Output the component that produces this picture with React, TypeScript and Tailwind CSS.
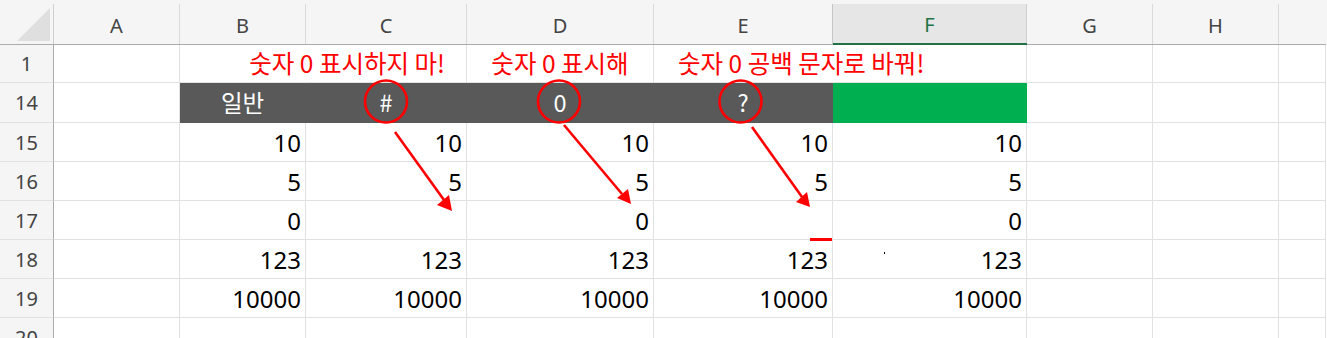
import React from "react";

const cols = [
  { k: "A", w: "w-[126px]" },
  { k: "B", w: "w-[126px]" },
  { k: "C", w: "w-[161px]" },
  { k: "D", w: "w-[187px]" },
  { k: "E", w: "w-[179px]" },
  { k: "F", w: "w-[194px]" },
  { k: "G", w: "w-[126px]" },
  { k: "H", w: "w-[126px]" },
  { k: "I", w: "w-[47px]" },
];

const latin = { fontFamily: '"Noto Sans", "Liberation Sans", sans-serif' };
const kr = { fontFamily: '"Noto Sans CJK KR", "Noto Sans", sans-serif' };

const data: Record<string, (string | number)[]> = {
  "15": [10, 10, 10, 10, 10],
  "16": [5, 5, 5, 5, 5],
  "17": [0, "", 0, "", 0],
  "18": [123, 123, 123, 123, 123],
  "19": [10000, 10000, 10000, 10000, 10000],
  "20": ["", "", "", "", ""],
};

function RowHead({ n, h }: { n: string; h: string }) {
  return (
    <div
      className={`w-[54px] ${h} shrink-0 bg-[#f5f5f5] border-r border-b border-r-[#ababab] border-b-[#e1e1e1] flex items-center justify-center text-[20px] text-[#444444] pt-[1px]`}
      style={latin}
    >
      {n}
    </div>
  );
}

function DataRow({ n }: { n: string }) {
  const vals = data[n];
  return (
    <div className="flex h-[39px]">
      <RowHead n={n} h="h-[39px]" />
      {cols.map((c, i) => {
        const v = i >= 1 && i <= 5 ? vals[i - 1] : "";
        return (
          <div
            key={c.k}
            className={`${c.w} h-[39px] shrink-0 border-r border-b border-[#e1e1e1] flex items-center justify-end pr-[4px] pt-[2px] text-[24px] text-black`}
            style={latin}
          >
            {v}
          </div>
        );
      })}
    </div>
  );
}

export default function App() {
  return (
    <div className="relative w-[1327px] h-[338px] overflow-hidden bg-white">
      {/* column header */}
      <div className="flex h-[45px] bg-[#f5f5f5]">
        <div className="w-[54px] h-[45px] shrink-0 border-b border-[#ababab] flex flex-col">
          <div className="flex-1 mt-[4px] border-r border-[#cfcfcf] relative">
            <svg width="53" height="40" viewBox="0 4 53 40" className="block">
              <polygon points="17,41 50,41 50,8" fill="#dfdfdf" />
            </svg>
          </div>
        </div>
        {cols.map((c) =>
          c.k === "F" ? (
            <div key={c.k} className={`${c.w} h-[45px] shrink-0 border-b-2 border-[#217346] flex flex-col`}>
              <div
                className="flex-1 mt-[4px] bg-[#e6e6e6] border-r border-[#d0d0d0] flex items-center justify-center text-[20px] text-[#217346] pt-[2px]"
                style={latin}
              >
                {c.k}
              </div>
            </div>
          ) : (
            <div key={c.k} className={`${c.w} h-[45px] shrink-0 border-b border-[#ababab] flex flex-col`}>
              <div
                className={`flex-1 mt-[4px] border-r ${c.k === "I" ? "border-transparent" : c.k === "E" ? "border-[#c6c6c6]" : "border-[#dadada]"} flex items-center justify-center text-[20px] text-[#444444] pt-[4px]`}
                style={latin}
              >
                {c.k === "I" ? "" : c.k}
              </div>
            </div>
          )
        )}
      </div>

      {/* row 1 */}
      <div className="flex h-[38px]">
        <RowHead n="1" h="h-[38px]" />
        <div className="w-[126px] h-[38px] shrink-0 border-r border-b border-[#e1e1e1]" />
        <div className="w-[126px] h-[38px] shrink-0 border-r border-b border-[#e1e1e1] border-r-transparent" />
        <div
          className="w-[161px] h-[38px] shrink-0 border-r border-b border-[#e1e1e1] flex items-center justify-end pr-[21px] whitespace-nowrap text-[24.5px] text-[#ff0000]"
          style={kr}
        >
          숫자 0 표시하지 마!
        </div>
        <div
          className="w-[187px] h-[38px] shrink-0 border-r border-b border-[#e1e1e1] flex items-center justify-center whitespace-nowrap text-[24.5px] text-[#ff0000]"
          style={kr}
        >
          숫자 0 표시해
        </div>
        <div
          className="w-[179px] h-[38px] shrink-0 border-r border-b border-[#e1e1e1] border-r-transparent flex items-center justify-start pl-[24px] whitespace-nowrap text-[24.5px] text-[#ff0000]"
          style={kr}
        >
          숫자 0 공백 문자로 바꿔!
        </div>
        <div className="w-[194px] h-[38px] shrink-0 border-r border-b border-[#e1e1e1]" />
        <div className="w-[126px] h-[38px] shrink-0 border-r border-b border-[#e1e1e1]" />
        <div className="w-[126px] h-[38px] shrink-0 border-r border-b border-[#e1e1e1]" />
        <div className="w-[47px] h-[38px] shrink-0 border-r border-b border-[#e1e1e1]" />
      </div>

      {/* row 14 */}
      <div className="flex h-[40px]">
        <RowHead n="14" h="h-[40px]" />
        <div className="w-[126px] h-[40px] shrink-0 border-r border-b border-[#e1e1e1]" />
        {[
          { w: "w-[126px]", t: "일반" },
          { w: "w-[161px]", t: "#" },
          { w: "w-[187px]", t: "0" },
          { w: "w-[179px]", t: "?" },
        ].map((c, i) => (
          <div
            key={i}
            className={`${c.w} h-[40px] shrink-0 bg-[#595959] border-r border-b border-[#595959] flex items-center justify-center text-[23.5px] text-white`}
            style={kr}
          >
            {c.t}
          </div>
        ))}
        <div className="w-[194px] h-[40px] shrink-0 bg-[#00b050] border-r border-b border-[#00b050]" />
        <div className="w-[126px] h-[40px] shrink-0 border-r border-b border-[#e1e1e1]" />
        <div className="w-[126px] h-[40px] shrink-0 border-r border-b border-[#e1e1e1]" />
        <div className="w-[47px] h-[40px] shrink-0 border-r border-b border-[#e1e1e1]" />
      </div>

      {["15", "16", "17", "18", "19", "20"].map((n) => (
        <DataRow key={n} n={n} />
      ))}

      {/* annotations */}
      <svg
        className="absolute left-0 top-0 pointer-events-none"
        width="1327"
        height="338"
        viewBox="0 0 1327 338"
      >
        <g fill="none" stroke="#ff0000" strokeWidth="2.6">
          <circle cx="386" cy="101.5" r="21" />
          <circle cx="559" cy="101.5" r="21" />
          <circle cx="740.5" cy="101.5" r="21" />
          <line x1="395" y1="132" x2="444" y2="200" />
          <line x1="564" y1="125" x2="622" y2="194" />
          <line x1="752" y1="127" x2="802" y2="197" />
        </g>
        <g fill="#ff0000">
          <polygon points="437,205 449,195 452,211" />
          <polygon points="617,198 628,189 631,204" />
          <polygon points="796,202 807,192 810,207" />
          <rect x="810" y="238" width="22" height="3" />
        </g>
        <rect x="884" y="252" width="1" height="2" fill="#000000" />
      </svg>
    </div>
  );
}
